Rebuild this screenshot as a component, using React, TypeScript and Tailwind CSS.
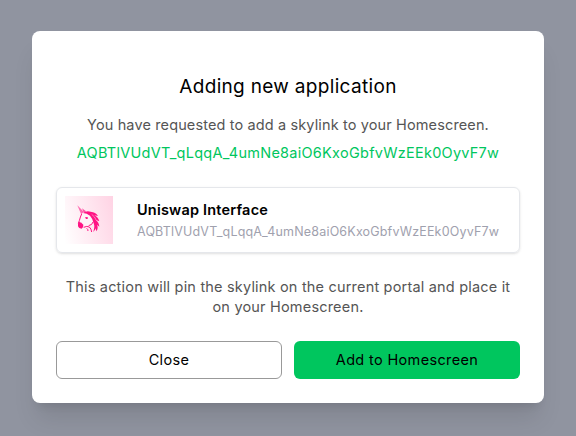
const SKYLINK = "AQBTlVUdVT_qLqqA_4umNe8aiO6KxoGbfvWzEEk0OyvF7w";

function UnicornIcon() {
  return (
    <svg viewBox="0 0 144 144" className="h-12 w-12" fill="#ff1384" aria-hidden="true">
      {/* horn and ear */}
      <path d="M37 28 L56 47 L49 56 Z" opacity=".6" />
      <path d="M51 37 L63 46 L57 51 Z" opacity=".7" />
      {/* face */}
      <path d="M50 54 Q58 47 72 50 L84 62 L86 82 L74 88 L60 91 L50 84 L45 75 Z" fill="#fff3f8" />
      <path d="M50 54 Q46 62 43 74 L40 83" fill="none" stroke="#ff1384" strokeWidth="3" />
      <path d="M41 77 Q50 79 55 86 Q56 95 50 98 Q41 98 39 91 Q38 83 41 77 Z" />
      <path d="M60 64 L68 63 L68 69 L63 69 Z" />
      {/* mane */}
      <path d="M54 51 Q64 43 77 47 Q92 48 99 60 L88 58 Q99 63 103 76 L92 71 Q102 79 103 92 L96 86 Q101 96 94 106 L92 97 Q91 104 84 108 Q91 93 86 82 Q84 69 75 59 Q66 52 54 51 Z" />
      <path d="M80 55 Q90 62 94 73" fill="none" stroke="#ffe3ef" strokeWidth="1.5" />
      {/* jaw and neck */}
      <path d="M56 94 Q66 89 73 93 Q79 98 80 108 M65 97 Q69 99 69 105 M71 89 Q82 87 84 78" fill="none" stroke="#ff1384" strokeWidth="3" />
    </svg>
  );
}

export default function App() {
  return (
    <div className="flex h-[436px] w-[576px] items-start justify-center overflow-hidden bg-[#9094a0] pt-[31px] font-['Inter','Liberation_Sans',sans-serif]">
      <div className="h-[372px] w-[512px] rounded-lg bg-white px-6 pt-11 pb-6 shadow-xl">
        <h3 className="text-center text-[19px] leading-6 tracking-[0.32px] whitespace-nowrap text-black">
          Adding new application
        </h3>
        <p className="mt-4 text-center text-[14.5px] leading-5 tracking-[0.13px] whitespace-nowrap text-[#555]">
          You have requested to add a skylink to your Homescreen.
        </p>
        <p className="mt-2 text-center text-[14.5px] leading-5 tracking-[0.26px] whitespace-nowrap text-[#00c65e]">
          {SKYLINK}
        </p>
        <div className="mt-6 flex h-[66px] items-center rounded-md border border-gray-200 px-2 shadow-sm">
          <div className="h-12 w-12 shrink-0 bg-linear-[75deg] from-white to-[#ffd3e4]">
            <UnicornIcon />
          </div>
          <div className="ml-6 whitespace-nowrap">
            <p className="pt-px text-[14.5px] leading-5 font-semibold tracking-[0.2px] text-black">
              Uniswap Interface
            </p>
            <p className="mt-[3px] text-[12.5px] leading-[18px] tracking-[0.18px] text-[#9fa1ae]">
              {SKYLINK}
            </p>
          </div>
        </div>
        <p className="mt-6 text-center text-[14.5px] leading-5 tracking-[0.19px] whitespace-nowrap text-[#555]">
          This action will pin the skylink on the current portal and place it
          <br />
          on your Homescreen.
        </p>
        <div className="mt-6 grid grid-cols-2 gap-3 text-[14.5px] tracking-[0.35px] text-black">
          <button className="h-[38px] rounded-md border border-[#999] bg-white">Close</button>
          <button className="h-[38px] rounded-md bg-[#00c65e]">Add to Homescreen</button>
        </div>
      </div>
    </div>
  );
}
